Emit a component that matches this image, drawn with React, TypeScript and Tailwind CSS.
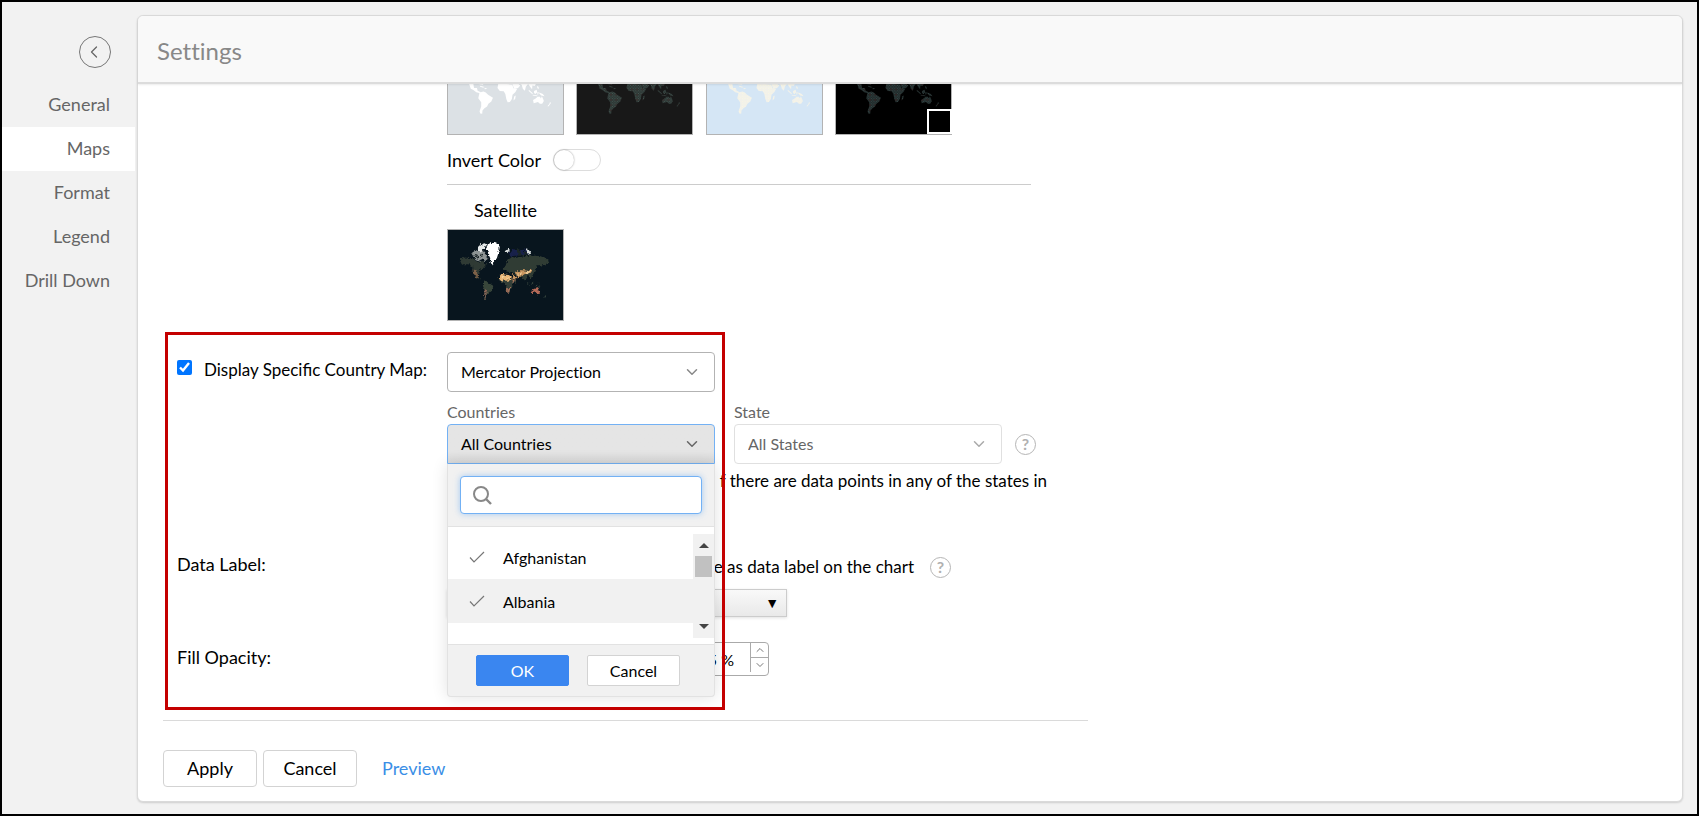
import { useState, type ReactNode } from "react";
import { ChevronDown, ChevronLeft, ChevronUp } from "lucide-react";

const navItems = ["General", "Maps", "Format", "Legend", "Drill Down"];

const countries = ["Afghanistan", "Albania"];

const mapThemes = [
  { name: "Light", bg: "bg-[#dce1e5]", land: "#ffffff", dot: "#ffffff", accent: "#ffffff" },
  { name: "Dark", bg: "bg-[#181818]", land: "#2b3634", dot: "#4a5853", accent: "#5a2c2a" },
  { name: "Ocean", bg: "bg-[#d5e6f5]", land: "#f1f1ec", dot: "#fbf8df", accent: "#f5f3e6" },
  { name: "Black", bg: "bg-black", land: "#1f2a2a", dot: "#3a4848", accent: "#5a1c1c" },
];

type WorldMapProps = { id: string; land: string; dot: string; accent: string };

function WorldMap({ id, land, dot, accent }: WorldMapProps) {
  return (
    <svg viewBox="51 -81 351 276" className="h-full w-full" aria-hidden="true">
      <defs>
        <pattern id={id} width="16" height="16" patternUnits="userSpaceOnUse">
          <rect width="16" height="16" fill={land} />
          <path fill={dot} d="M1 1 h3 v3 h-3 z M9 1 h3 v3 h-3 z M5 5 h3 v3 h-3 z M13 5 h3 v3 h-3 z M1 9 h3 v3 h-3 z M5 13 h3 v3 h-3 z M13 13 h3 v3 h-3 z" />
          <rect x="9" y="9" width="3" height="3" fill={accent} />
        </pattern>
      </defs>
      <g fill={`url(#${id})`}>
        <path d="M92 -20 L176 -20 L184 10 L166 32 L157 44 L143 42 L128 42 L130 54 L139 54 L141 62 L151 67 L148 70 L137 67 L128 60 L120 56 L115 42 L100 20 Z" />
        <path d="M148 47 l12 3 l-1 3 l-10 -3 z M162 53 l9 3 l-8 2 z" />
        <path d="M147 68 L159 65 L166 68 L173 75 L188 84 L183 95 L174 102 L170 111 L162 116 L156 123 L155 133 L149 132 L147 125 L152 111 L152 98 L143 85 Z" />
        <path d="M205 36 L216 41 L230 42 L247 43 L251 55 L262 57 L257 66 L248 75 L246 88 L240 97 L233 98 L229 88 L226 72 L221 64 L209 63 L202 54 Z" />
        <path d="M253 80 L258 77 L256 88 L251 92 Z" />
        <path d="M246 20 L262 38 L272 46 L265 54 L254 57 L248 44 Z" />
        <path d="M210 -20 L372 -20 L350 20 L322 38 L316 48 L309 46 L308 58 L303 52 L296 42 L289 49 L286 62 L280 57 L276 44 L262 38 L210 30 Z" />
        <path d="M299 60 l11 10 l-1 3 l-12 -11 z M314 63 l8 -4 l2 8 l-6 5 l-4 -3 z M310 75 l14 2 v2 l-14 -2 z M325 66 l3 0 l-1 8 l-3 0 z M330 68 l11 4 l5 7 l-10 -2 l-6 -6 z M324 47 l4 4 l0 7 l-4 -4 z" />
        <path d="M311 91 L319 86 L325 81 L332 81 L335 86 L338 79 L342 88 L344 94 L339 102 L332 102 L326 97 L313 101 Z" />
        <path d="M363 97 l3 3 l-4 5 l-3 5 l-4 0 l6 -7 z" />
      </g>
    </svg>
  );
}

function SatelliteMap() {
  return (
    <svg viewBox="51 117 351 276" className="h-full w-full" aria-hidden="true">
      <defs>
        {/* roughens the coastlines */}
        <filter id="coast" x="0" y="0" width="1" height="1" colorInterpolationFilters="sRGB">
          <feTurbulence type="fractalNoise" baseFrequency="0.15" numOctaves="2" seed="4" result="noise" />
          <feDisplacementMap in="SourceGraphic" in2="noise" scale="14" xChannelSelector="R" yChannelSelector="G" />
        </filter>
      </defs>
      <g filter="url(#coast)">
        <path fill="#2f3a34" d="M86 208 L102 201 L126 204 L140 214 L158 212 L168 222 L158 234 L149 241 L146 250 L140 254 L142 264 L156 273 L148 270 L134 260 L126 244 L124 228 L112 222 L92 222 Z" />
        <path fill="#7d6148" d="M125 238 l10 2 l7 12 l-1 12 l-9 -8 z" />
        <path fill="#8f9696" d="M122 188 L136 178 L144 184 L156 180 L166 192 L172 206 L164 212 L154 204 L150 214 L138 210 L130 202 Z" />
        <path fill="#222c2e" d="M132 190 l8 2 l4 8 l-6 2 z M150 190 l6 4 l-2 6 l-5 -4 z" />
        <path fill="#e6e9e9" d="M142 174 l6 -12 l14 -4 l8 4 l-8 9 l-4 9 l-8 6 l-8 -4 z" />
        <path fill="#ffffff" d="M166 172 L174 160 L190 156 L205 160 L209 169 L206 184 L200 204 L192 212 L186 226 L181 216 L178 198 L174 184 Z" />
        <path fill="#38463a" d="M158 276 L168 275 L190 289 L184 302 L176 308 L168 318 L164 331 L161 326 L163 302 L157 288 Z" />
        <path fill="#8a6456" d="M163 298 l6 4 l-1 12 l-4 15 l-3 -4 z" />
        <path fill="#303c34" d="M218 238 L228 224 L232 208 L242 200 L258 202 L292 196 L330 196 L350 204 L362 214 L350 222 L338 226 L328 224 L318 238 L310 256 L304 266 L296 258 L290 262 L284 272 L278 262 L262 260 L250 248 L230 244 Z" />
        <path fill="#18214a" d="M240 184 l10 -8 l26 2 l18 -2 l10 12 l-20 6 l-28 2 l-18 2 z" />
        <path fill="#1a2624" d="M262 176 l10 2 l2 18 l-10 0 z M282 182 l10 2 l0 8 l-8 2 z" />
        <path fill="#d7dcdc" d="M226 176 l10 -2 l4 4 l-8 10 l-4 -4 z M290 172 l7 5 l9 12 l-10 4 l-3 -8 z" />
        <path fill="#343f38" d="M206 268 L244 268 L258 274 L248 286 L243 300 L238 310 L230 306 L229 288 L222 278 L208 276 Z" />
        <path fill="#a4705a" d="M231 296 l10 -2 l-3 14 l-6 2 z M248 270 l8 -2 l-6 12 z" />
        <path fill="#eab777" d="M206 262 L214 251 L228 254 L242 256 L246 270 L232 273 L208 271 Z" />
        <path fill="#c99660" d="M246 252 l8 4 l8 6 l-6 8 l-7 2 z M258 246 l16 -6 l20 2 l16 -4 l-6 10 l-18 4 l-14 8 l-10 2 z" />
        <path fill="#b56a58" d="M306 303 L314 297 L326 296 L332 304 L333 312 L324 314 L316 309 L308 310 Z" />
        <path fill="#32403a" d="M294 280 l8 6 l-2 2 l-8 -6 z M305 279 l6 -3 l1 7 l-5 2 z M322 284 l12 5 l-3 2 l-9 -3 z M328 276 l3 4 l-3 0 z M349 316 l4 4 l-5 6 l-2 -1 z" />
        <path fill="#f1d3a0" d="M214 257 l10 2 l-2 3 l-9 -2 z M230 262 l8 2 l-2 4 l-8 -3 z M264 255 l12 -5 l1 3 l-10 5 z M288 247 l14 -4 l0 3 l-12 4 z" />
      </g>
    </svg>
  );
}

function HelpIcon() {
  return (
    <button
      type="button"
      aria-label="Help"
      className="flex h-[21px] w-[21px] items-center justify-center rounded-full border border-[#b5b5b5] text-base leading-none font-bold text-[#b0b0b0]"
    >
      ?
    </button>
  );
}

function SelectBox({ label, value, muted }: { label: string; value: string; muted?: boolean }) {
  return (
    <div className="relative w-[268px]">
      <select
        aria-label={label}
        className={`block h-10 w-full appearance-none rounded border bg-white px-[13px] text-base ${
          muted ? "border-[#e0e0e0] text-[#666]" : "border-[#b3b3b3] text-black"
        }`}
      >
        <option>{value}</option>
      </select>
      <ChevronDown
        className={`pointer-events-none absolute top-[11px] right-[14px] h-[18px] w-[18px] ${
          muted ? "text-[#aaa]" : "text-[#888]"
        }`}
      />
    </div>
  );
}

function TickIcon() {
  return (
    <svg viewBox="0 0 16 12" className="h-3 w-4 fill-none stroke-[#777]" aria-hidden="true">
      <path d="M1 6.5 L5 11 L15 1" strokeWidth="1.2" />
    </svg>
  );
}

function CountryDropdown() {
  const [search, setSearch] = useState("");

  return (
    <div className="absolute top-full left-0 z-10 w-[268px] rounded-b border border-t-0 border-[#e2e2e2] bg-[#f1f1f1] shadow-[0_0_16px_rgba(0,0,0,0.12)]">
      <div className="border-b border-[#e2e2e2] p-3">
        <label className="flex h-[38px] items-center rounded border border-[#73b1f4] bg-white pl-3 shadow-[0_0_6px_rgba(115,177,244,0.6)]">
          <svg viewBox="0 0 19 19" className="h-[19px] w-[19px] fill-none stroke-[#888]" aria-hidden="true">
            <circle cx="8" cy="8" r="7" strokeWidth="2" />
            <path d="M13 13 L18 18" strokeWidth="2.4" />
          </svg>
          <input
            type="text"
            aria-label="Search countries"
            value={search}
            onChange={(e) => setSearch(e.target.value)}
            className="min-w-0 flex-1 px-2 text-base outline-none"
          />
        </label>
      </div>
      <div className="flex h-[117px] bg-white">
        <ul className="flex-1 pt-2">
          {countries.map((country) => (
            <li key={country} className="h-11 even:bg-[#f1f1f1]">
              <button type="button" className="flex h-full w-full items-center gap-[18px] pl-[21px] text-base">
                <TickIcon />
                <span className="pt-[2px]">{country}</span>
              </button>
            </li>
          ))}
        </ul>
        <div className="mt-[7px] flex h-[104px] w-[21px] flex-col items-center bg-[#f1f1f1] py-[9px]">
          <span className="border-x-[5px] border-b-[5px] border-x-transparent border-b-[#444]" />
          <span className="mt-2 h-[21px] w-[17px] bg-[#c1c1c1]" />
          <span className="mt-auto border-x-[5px] border-t-[5px] border-x-transparent border-t-[#444]" />
        </div>
      </div>
      <div className="flex gap-[18px] border-t border-[#e2e2e2] py-[10px] pl-7">
        <button type="button" className="h-[31px] w-[93px] rounded-xs border border-[#3a86f0] bg-[#3a86f0] pt-px text-base leading-none text-white">
          OK
        </button>
        <button type="button" className="h-[31px] w-[93px] rounded-xs border border-[#d3d3d3] bg-white pt-px text-base leading-none">
          Cancel
        </button>
      </div>
    </div>
  );
}

function FormRow({ label, className, children }: { label: ReactNode; className: string; children: ReactNode }) {
  return (
    <div className={`flex items-start ${className}`}>
      <div className="w-[270px] shrink-0">{label}</div>
      <div>{children}</div>
    </div>
  );
}

export default function App() {
  const [active, setActive] = useState("Maps");
  const [specific, setSpecific] = useState(true);

  return (
    <div className="flex min-h-screen border-2 border-black bg-[#f2f2f2] font-['Lato',sans-serif] text-lg leading-6 text-black [font-variant-ligatures:none]">
      {/* Sidebar */}
      <nav className="w-[133px] shrink-0 pt-[34px]">
        <button
          type="button"
          aria-label="Back"
          className="ml-[77px] flex h-8 w-8 items-center justify-center rounded-full border border-[#777] pr-[2px] text-[#666]"
        >
          <ChevronLeft className="h-5 w-5" strokeWidth={1.5} />
        </button>
        <ul className="mt-[15px]">
          {navItems.map((item) => (
            <li key={item}>
              <button
                type="button"
                onClick={() => setActive(item)}
                className={`h-11 w-full pr-[25px] pb-[3px] text-right text-[#666] ${active === item ? "bg-white" : ""}`}
              >
                {item}
              </button>
            </li>
          ))}
        </ul>
      </nav>

      <main className="mt-[13px] mr-[14px] mb-3 ml-[2px] flex flex-1 flex-col rounded-md border border-[#dadada] bg-white shadow-[0_1px_2px_rgba(0,0,0,0.15)]">
        <header className="z-10 flex h-[68px] items-center rounded-t-md border-b-2 border-[#dcdcdc] bg-[#f9f9f9] pt-[3px] pl-[19px] shadow-[0_1px_2px_rgba(0,0,0,0.08)]">
          <h1 className="text-2xl text-[#888]">Settings</h1>
        </header>

        <div className="relative flex-1 pl-[39px]">
          {/* Map styles */}
          <section className="ml-[270px] w-[584px]">
            <div className="-mt-[41px] flex w-[505px] justify-between">
              {mapThemes.map((theme) => (
                <button
                  key={theme.name}
                  type="button"
                  aria-label={theme.name}
                  className={`relative h-[92px] w-[117px] border border-[#b3b3b3] ${theme.bg}`}
                >
                  <WorldMap id={theme.name} land={theme.land} dot={theme.dot} accent={theme.accent} />
                  {theme.name === "Black" && (
                    <span className="absolute -right-px bottom-0 h-[25px] w-[25px] border-2 border-white bg-black" />
                  )}
                </button>
              ))}
            </div>
            <label className="mt-[14px] flex h-[22px] items-center gap-3">
              Invert Color
              <input type="checkbox" role="switch" className="peer sr-only" />
              <span className="h-[22px] w-12 rounded-full border border-[#ddd] bg-white">
                <span className="block h-5 w-5 rounded-full bg-white shadow-[0_0_2px_rgba(0,0,0,0.4)]" />
              </span>
            </label>
            <hr className="mt-[13px] border-[#ccc]" />
            <div className="mt-[13px] w-[117px] text-center">
              <p>Satellite</p>
              <button type="button" aria-label="Satellite" className="mt-[7px] block h-[92px] w-full border border-[#b3b3b3] bg-[#08151e]">
                <SatelliteMap />
              </button>
            </div>
          </section>

          {/* Country map */}
          <FormRow
            className="mt-[31px]"
            label={
              <label className="flex items-start gap-3 pt-[6px] text-[17px] leading-6 [font-variant-ligatures:normal]">
                <input
                  type="checkbox"
                  checked={specific}
                  onChange={(e) => setSpecific(e.target.checked)}
                  className="mt-[2px] h-[15px] w-[15px] accent-[#0075ff]"
                />
                Display Specific Country Map:
              </label>
            }
          >
            <SelectBox label="Projection" value="Mercator Projection" />
            <div className="mt-2 flex gap-[19px] text-base leading-6 text-[#666]">
              <div>
                <p>Countries</p>
                <div className="relative">
                  <button
                    type="button"
                    aria-expanded="true"
                    className="flex h-10 w-[268px] items-center justify-between rounded-t border border-[#73b1f4] bg-linear-to-b from-[#e5e5e5] from-70% to-[#d9d9d9] px-[13px] text-black"
                  >
                    All Countries
                    <ChevronDown className="h-[18px] w-[18px] text-[#666]" />
                  </button>
                  <div className="text-black">
                    <CountryDropdown />
                  </div>
                </div>
              </div>
              <div>
                <p>State</p>
                <div className="flex items-center gap-[13px]">
                  <SelectBox label="State" value="All States" muted />
                  <HelpIcon />
                </div>
              </div>
            </div>
            <p className="mt-[5px] w-[600px] text-right text-[17px] leading-6">
              f there are data points in any of the states in
            </p>
          </FormRow>

          <FormRow className="mt-[59px]" label="Data Label:">
            <div className="flex w-[504px] items-center justify-end gap-4 pt-[3px] text-[17px] leading-6">
              <span>e as data label on the chart</span>
              <HelpIcon />
            </div>
            <div className="relative mt-[10px] w-[340px]">
              <select
                aria-label="Data label"
                className="block h-7 w-full appearance-none border border-[#ccc] bg-linear-to-b from-[#f9f9f9] to-[#e9e9e9] shadow-[0_1px_3px_rgba(0,0,0,0.12)]"
              />
              <span className="pointer-events-none absolute top-0 right-2 text-sm leading-7">▼</span>
            </div>
          </FormRow>

          <FormRow className="mt-[25px]" label={<label htmlFor="opacity" className="block pt-[3px]">Fill Opacity:</label>}>
            <div className="ml-[202px] flex h-[34px] w-[120px] rounded border border-[#aaa] bg-white">
              <input id="opacity" defaultValue="5 %" className="min-w-0 flex-1 pt-px pr-4 text-right text-base" />
              <div className="mb-[3px] flex w-[18px] flex-col border-l border-[#aaa] text-[#777]">
                <button type="button" aria-label="Increase" className="flex h-[15px] items-center justify-center border-b border-[#aaa]">
                  <ChevronUp className="h-3 w-3" />
                </button>
                <button type="button" aria-label="Decrease" className="flex h-[15px] items-center justify-center">
                  <ChevronDown className="h-3 w-3" />
                </button>
              </div>
            </div>
          </FormRow>

          {/* Highlight frame */}
          <div className="pointer-events-none absolute top-[248px] left-[27px] z-20 h-[378px] w-[560px] border-3 border-[#c40000]" />
        </div>

        <footer className="pb-[14px] pl-[25px]">
          <hr className="w-[925px] border-[#dadada]" />
          <div className="mt-[29px] flex items-center">
            <button type="button" className="h-[37px] w-[94px] rounded border border-[#d3d3d3] bg-white pb-px">
              Apply
            </button>
            <button type="button" className="ml-[6px] h-[37px] w-[94px] rounded border border-[#d3d3d3] bg-white pb-px">
              Cancel
            </button>
            <a href="#preview" className="ml-[25px] pb-px text-[#3a8ee6]">
              Preview
            </a>
          </div>
        </footer>
      </main>
    </div>
  );
}
